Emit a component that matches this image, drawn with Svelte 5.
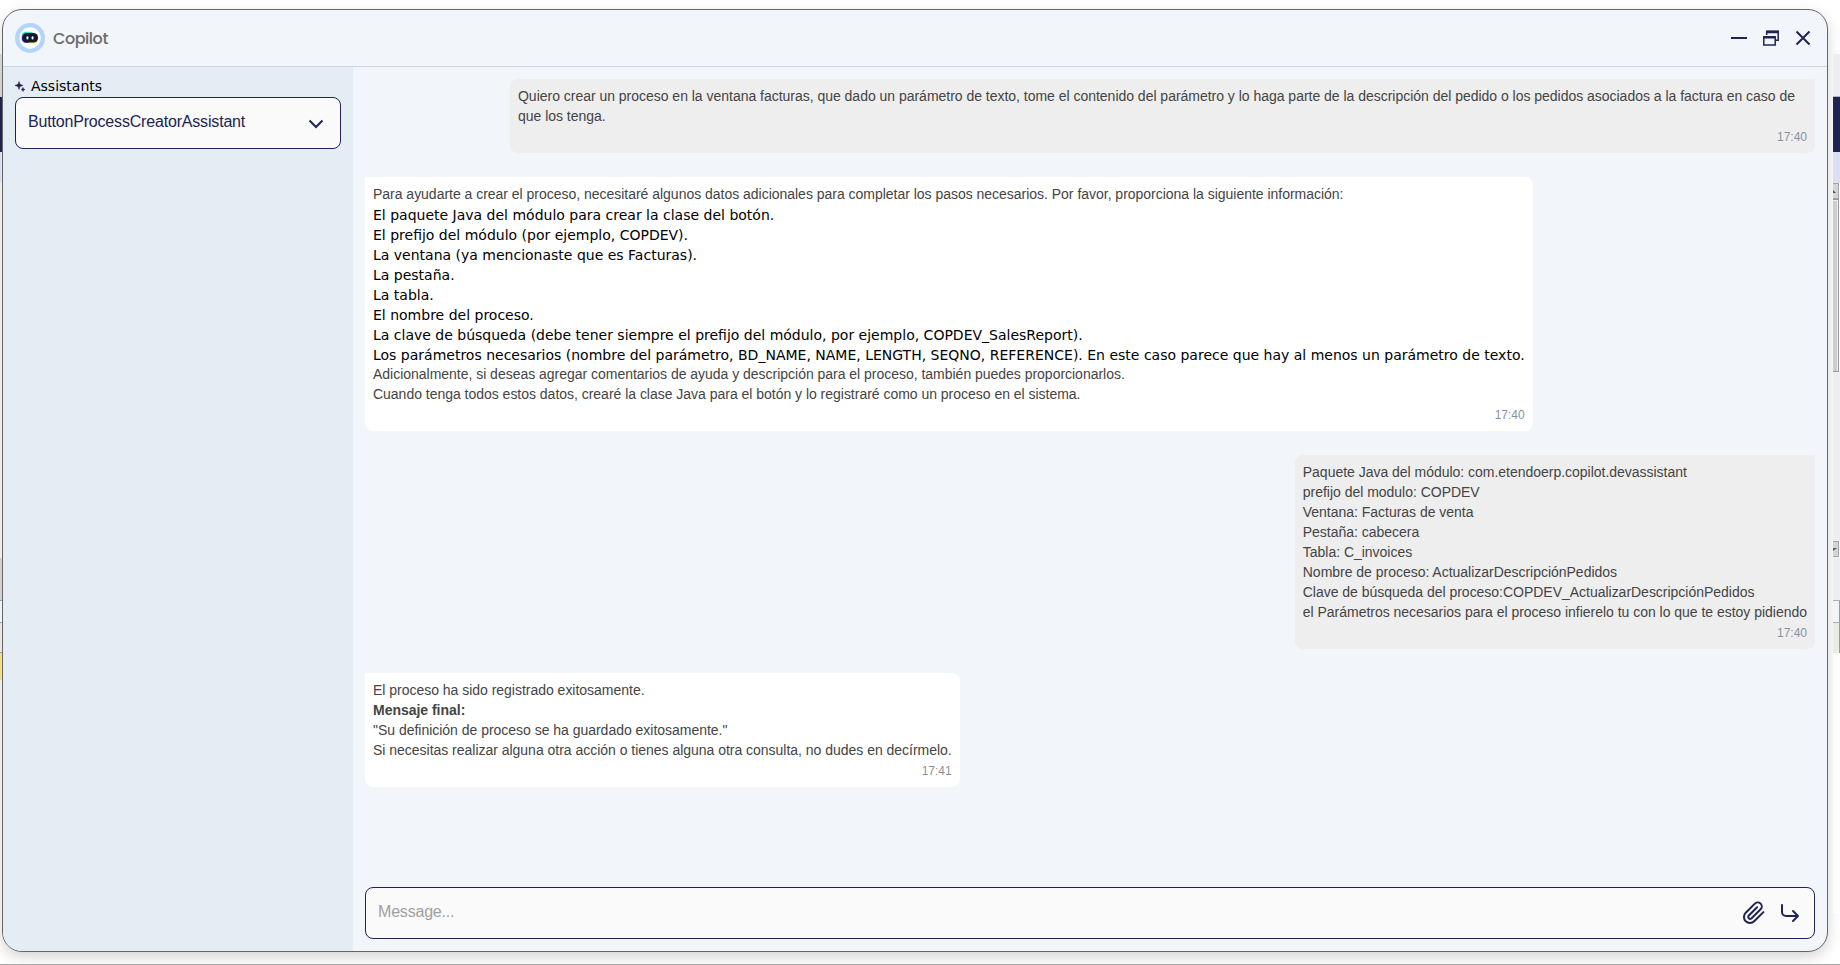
<script>
  const messages = [
    {
      side: 'user',
      time: '17:40',
      lines: [
        { text: 'Quiero crear un proceso en la ventana facturas, que dado un parámetro de texto, tome el contenido del parámetro y lo haga parte de la descripción del pedido o los pedidos asociados a la factura en caso de que los tenga.' }
      ]
    },
    {
      side: 'bot',
      time: '17:40',
      lines: [
        { text: 'Para ayudarte a crear el proceso, necesitaré algunos datos adicionales para completar los pasos necesarios. Por favor, proporciona la siguiente información:' },
        { kind: 'item', text: 'El paquete Java del módulo para crear la clase del botón.' },
        { kind: 'item', text: 'El prefijo del módulo (por ejemplo, COPDEV).' },
        { kind: 'item', text: 'La ventana (ya mencionaste que es Facturas).' },
        { kind: 'item', text: 'La pestaña.' },
        { kind: 'item', text: 'La tabla.' },
        { kind: 'item', text: 'El nombre del proceso.' },
        { kind: 'item', text: 'La clave de búsqueda (debe tener siempre el prefijo del módulo, por ejemplo, COPDEV_SalesReport).' },
        { kind: 'item', text: 'Los parámetros necesarios (nombre del parámetro, BD_NAME, NAME, LENGTH, SEQNO, REFERENCE). En este caso parece que hay al menos un parámetro de texto.' },
        { text: 'Adicionalmente, si deseas agregar comentarios de ayuda y descripción para el proceso, también puedes proporcionarlos.' },
        { text: 'Cuando tenga todos estos datos, crearé la clase Java para el botón y lo registraré como un proceso en el sistema.' }
      ]
    },
    {
      side: 'user',
      time: '17:40',
      lines: [
        { text: 'Paquete Java del módulo: com.etendoerp.copilot.devassistant' },
        { text: 'prefijo del modulo: COPDEV' },
        { text: 'Ventana: Facturas de venta' },
        { text: 'Pestaña: cabecera' },
        { text: 'Tabla: C_invoices' },
        { text: 'Nombre de proceso: ActualizarDescripciónPedidos' },
        { text: 'Clave de búsqueda del proceso:COPDEV_ActualizarDescripciónPedidos' },
        { text: 'el Parámetros necesarios para el proceso infierelo tu con lo que te estoy pidiendo' }
      ]
    },
    {
      side: 'bot',
      time: '17:41',
      lines: [
        { text: 'El proceso ha sido registrado exitosamente.' },
        { kind: 'strong', text: 'Mensaje final:' },
        { text: '"Su definición de proceso se ha guardado exitosamente."' },
        { text: 'Si necesitas realizar alguna otra acción o tienes alguna otra consulta, no dudes en decírmelo.' }
      ]
    }
  ];
</script>

<div class="desktop">
  <div class="edge left">
    <i style="height:54px"></i>
    <i style="height:43px;background:#d3d3d3"></i>
    <i style="height:55px;background:#1f2350"></i>
    <i style="height:30px;background:#dcdef5"></i>
    <i style="height:376px"></i>
    <i style="height:42px;background:#d3d3d3"></i>
    <i style="height:1px;background:#9a9ea8"></i>
    <i style="height:21px;background:#eef3fa"></i>
    <i style="height:1px;background:#9a9ea8"></i>
    <i style="height:29px;background:#e6e7e2"></i>
    <i style="height:1px;background:#9a9ea8"></i>
    <i style="height:27px;background:#f7de80"></i>
  </div>
  <div class="edge right">
    <i style="height:54px"></i>
    <i style="height:42px;background:#ededf3"></i>
    <i style="height:1px;background:#b5b5b8"></i>
    <i style="height:55px;background:#1f2350"></i>
    <i style="height:31px;background:#dcdef5"></i>
    <i class="btn"><svg width="6" height="15"><path d="M0 9h3L0 6z" fill="#555" /></svg></i>
    <i class="thumb"></i>
    <i style="height:169px;background:#eee"></i>
    <i class="btn"><svg width="6" height="15"><path d="M0 6h4L0 9z" fill="#555" /></svg></i>
    <i style="height:43px;background:#ededf4"></i>
    <i style="height:1px;background:#a8adb3"></i>
    <i class="cell" style="height:21px;background:#f1f5fb"></i>
    <i style="height:1px;background:#a8adb3"></i>
    <i class="cell" style="height:30px;background:#e9ece5"></i>
    <i style="height:260px;background:linear-gradient(90deg,#fcfcfc,#fff)"></i>
  </div>

  <section class="window">
    <header>
      <svg class="logo" width="30" height="30" viewBox="0 0 30 30">
        <circle cx="15" cy="15" r="15" fill="#b3d4ff" />
        <circle cx="15" cy="15" r="10.7" fill="#fff" />
        <rect x="6.5" y="8.800" width="13" height="9" rx="4.5" fill="#25e6d5" />
        <rect x="11" y="11.500" width="12" height="9" rx="4.5" fill="#ffe94a" />
        <rect x="6.700" y="11.300" width="9" height="8.800" rx="4.4" fill="#6a3cff" />
        <rect x="7.2" y="9.900" width="15.8" height="9.600" rx="4.6" fill="#101a2e" />
        <rect x="11.500" y="13.300" width="1.900" height="3.200" rx=".9" fill="#fff" />
        <rect x="16.600" y="13.300" width="1.900" height="3.200" rx=".9" fill="#fff" />
      </svg>
      <h1>Copilot</h1>
      <div class="controls">
        <svg width="16" height="16" viewBox="0 0 16 16"><path d="M0 8h16" stroke="#202452" stroke-width="2" /></svg>
        <svg width="16" height="16" viewBox="0 0 16 16" fill="none" stroke="#202452" stroke-width="1.5">
          <path d="M3.7 5V1.3h11.5v8.9H12" /><path d="M3 2h13" stroke-width="2.4" />
          <path d="M.8 6.7h11.4v8.4H.8z" /><path d="M0 7.4h13" stroke-width="2.4" />
        </svg>
        <svg width="16" height="16" viewBox="0 0 16 16"><path d="M1.5 1.5l13 13m0-13l-13 13" stroke="#202452" stroke-width="2" /></svg>
      </div>
    </header>
    <div class="body">
      <aside>
        <div class="label">
          <svg width="10" height="11" viewBox="0 0 10 11" fill="#202452" stroke="#202452" stroke-width=".5">
            <path d="M4 .5l1 2.8 3 1.1-3 1.1-1 2.9-1-2.9L0 4.4l3-1.1z" /><path d="M8 6.5l.6 1.5 1.4.5-1.4.6L8 10.6l-.6-1.5L6 8.5 7.4 8z" />
          </svg>
          <span>Assistants</span>
        </div>
        <div class="select">
          <span>ButtonProcessCreatorAssistant</span>
          <svg width="16" height="10" viewBox="0 0 16 10" fill="none" stroke="#202452" stroke-width="2"><path d="M1.5 1.5L8 8l6.500-6.500" /></svg>
        </div>
      </aside>
      <main>
        <div class="messages">
          {#each messages as message}
            <article class={message.side}>
              {#each message.lines as line}
                <p class={line.kind ?? 'plain'}>{line.text}</p>
              {/each}
              <time>{message.time}</time>
            </article>
          {/each}
        </div>
        <div class="composer">
          <span>Message...</span>
          <svg class="clip" width="24" height="24" viewBox="0 0 24 24" fill="none" stroke="#202452" stroke-width="2" stroke-linecap="round" stroke-linejoin="round">
            <path d="M21.4 11.1l-9.200 9.200a6 6 0 0 1-8.500-8.500l9.200-9.200a4 4 0 0 1 5.700 5.700l-9.200 9.200a2 2 0 0 1-2.800-2.800l8.500-8.500" />
          </svg>
          <svg class="send" width="20" height="20" viewBox="0 0 20 20" fill="none" stroke="#202452" stroke-width="2" stroke-linecap="round" stroke-linejoin="round">
            <path d="M2 2v7a4 4 0 0 0 4 4h12M13 8l5 5-5 5" />
          </svg>
        </div>
      </main>
    </div>
  </section>
</div>

<style>
  :global(body) { margin: 0; }
  .desktop {
    box-sizing: border-box;
    position: relative;
    width: 1840px;
    height: 965px;
    padding: 9px 12px 12px 2px;
    overflow: hidden;
    background: #fff;
    border-bottom: 1px solid #a9a9a9;
    font: 14px/20px 'Liberation Sans', Arial, sans-serif;
  }
  .edge { position: absolute; top: 0; display: flex; flex-direction: column; z-index: 2; }
  .edge.left { left: 0; width: 2px; }
  .edge.right { right: 0; width: 7px; }
  .edge i { box-sizing: border-box; flex: none; }
  .btn { height: 16px; background: #d4d4d4; border: solid #a5a5a5; border-width: 1px 1px 1px 0; margin-right: 1px; }
  .btn svg { display: block; }
  .thumb { height: 173px; background: #cecece; border: solid #999; border-width: 1px 1px 1px 0; margin: 0 1px 0 0; box-shadow: inset -1px 1px #eee; }
  .cell { border-right: 1px solid #999; }
  .window {
    position: relative;
    box-sizing: border-box;
    height: 943px;
    display: flex;
    flex-direction: column;
    overflow: hidden;
    border: 1px solid #666;
    border-radius: 20px;
    background: #f2f5fa;
    box-shadow: 0 5px 14px rgba(0, 0, 0, 0.17);
  }
  header {
    box-sizing: border-box;
    height: 57px;
    flex: none;
    display: flex;
    align-items: center;
    padding: 0 16px 0 12px;
    border-bottom: 1px solid #cfd4e6;
  }
  h1 { margin: 2px 0 0 8px; font: 500 16px/24px Poppins, Inter, sans-serif; color: #6b6b6b; letter-spacing: -0.45px; }
  .controls { display: flex; gap: 16px; margin-left: auto; }
  .body { flex: 1; display: flex; min-height: 0; }
  aside { box-sizing: border-box; width: 350px; padding: 9px 12px; background: #e4ecf4; }
  .label { display: flex; align-items: center; gap: 6px; height: 21px; font: 14px/20px 'DejaVu Sans', sans-serif; color: #000; }
  .label span { height: 21px; }
  .select {
    box-sizing: border-box;
    display: flex;
    align-items: center;
    justify-content: space-between;
    height: 52px;
    padding: 0 16px 2px 12px;
    border: 1px solid #202452;
    border-radius: 8px;
    background: #fafafa;
    color: #202452;
    font-size: 16px;
    letter-spacing: -0.18px;
  }
  .select svg { margin-top: 4px; }
  main { flex: 1; display: flex; flex-direction: column; justify-content: space-between; padding: 12px; min-width: 0; }
  .messages { display: flex; flex-direction: column; gap: 24px; }
  article { box-sizing: border-box; padding: 7px 8px 8px; max-width: 1305px; color: #444; display: flex; flex-direction: column; }
  article p { margin: 0; letter-spacing: -0.02px; }
  article.user { align-self: flex-end; background: #eee; border-radius: 8px 0 8px 8px; }
  article.bot { align-self: flex-start; background: #fff; border-radius: 0 8px 8px 8px; }
  article p.item { font-family: 'DejaVu Sans', sans-serif; color: #000; white-space: nowrap; letter-spacing: 0; height: 20px; padding-top: 1px; margin-bottom: -1px; }
  p.strong { font-weight: 700; }
  time { align-self: flex-end; height: 19px; font-size: 12px; line-height: 22px; color: #8a90a2; }
  .composer {
    box-sizing: border-box;
    display: flex;
    align-items: center;
    height: 52px;
    padding: 0 14px 0 12px;
    border: 1px solid #202452;
    border-radius: 8px;
    background: #fafafa;
    color: #a0a0a0;
    font-size: 16px;
    letter-spacing: -0.2px;
  }
  .composer span { margin: 0 auto 2px 0; }
  .clip { margin-right: 14px; }
</style>
